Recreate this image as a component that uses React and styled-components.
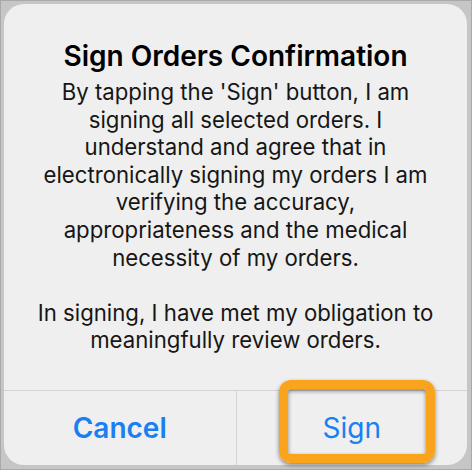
import React from 'react'
import styled, { createGlobalStyle } from 'styled-components'

const GlobalStyle = createGlobalStyle`
    html, body {
        margin: 0;
        padding: 0;
        background: #c4c4c4;
    }
    * {
        box-sizing: border-box;
    }
`;

const Frame = styled.div`
    width: 472px;
    height: 470px;
    padding: 3px 4px 4px 3px;
    background: #c6c6c6;
    border: 1px solid #a9a9a9;
    font-family: Inter, "Noto Sans", sans-serif;
`;

const Dialog = styled.div`
    height: 100%;
    display: flex;
    flex-direction: column;
    background: #efefef;
    border-radius: 20px;
`;

const Content = styled.div`
    flex: 1;
    display: flex;
    flex-direction: column;
    align-items: center;
    padding: 35px 16px 0;
    text-align: center;
`;

const Title = styled.h2`
    margin: 0 0 5px;
    font-size: 28px;
    font-weight: 600;
    line-height: 34px;
    color: #000;
`;

const Message = styled.p`
    margin: 0;
    font-size: 22.2px;
    line-height: 27.6px;
    color: #161616;
`;

const Actions = styled.div`
    display: grid;
    grid-template-columns: 1fr 1fr;
    height: 75px;
    border-top: 1px solid #d3d3d3;
`;

const ActionButton = styled.button`
    position: relative;
    border: none;
    background: transparent;
    font-family: inherit;
    font-size: 28px;
    font-weight: ${p => (p.$bold ? 600 : 400)};
    color: #1a7ff0;
    padding: 0;
    & + & {
        border-left: 1px solid #d3d3d3;
    }
`;

const Highlight = styled.span`
    position: absolute;
    left: 42px;
    right: 32px;
    top: -11px;
    bottom: 2px;
    border: 9px solid #faa41e;
    border-radius: 12px;
    box-shadow: 0 2px 4px rgba(0, 0, 0, 0.45), inset 0 2px 4px rgba(0, 0, 0, 0.45);
    pointer-events: none;
`;

function App() {
    return (
        <>
            <GlobalStyle />
            <Frame>
                <Dialog>
                    <Content>
                        <Title>Sign Orders Confirmation</Title>
                        <Message>
                            By tapping the 'Sign' button, I am<br />
                            signing all selected orders. I<br />
                            understand and agree that in<br />
                            electronically signing my orders I am<br />
                            verifying the accuracy,<br />
                            appropriateness and the medical<br />
                            necessity of my orders.<br />
                            <br />
                            In signing, I have met my obligation to<br />
                            meaningfully review orders.
                        </Message>
                    </Content>
                    <Actions>
                        <ActionButton $bold>Cancel</ActionButton>
                        <ActionButton>
                            Sign
                            <Highlight />
                        </ActionButton>
                    </Actions>
                </Dialog>
            </Frame>
        </>
    )
}

export default App
